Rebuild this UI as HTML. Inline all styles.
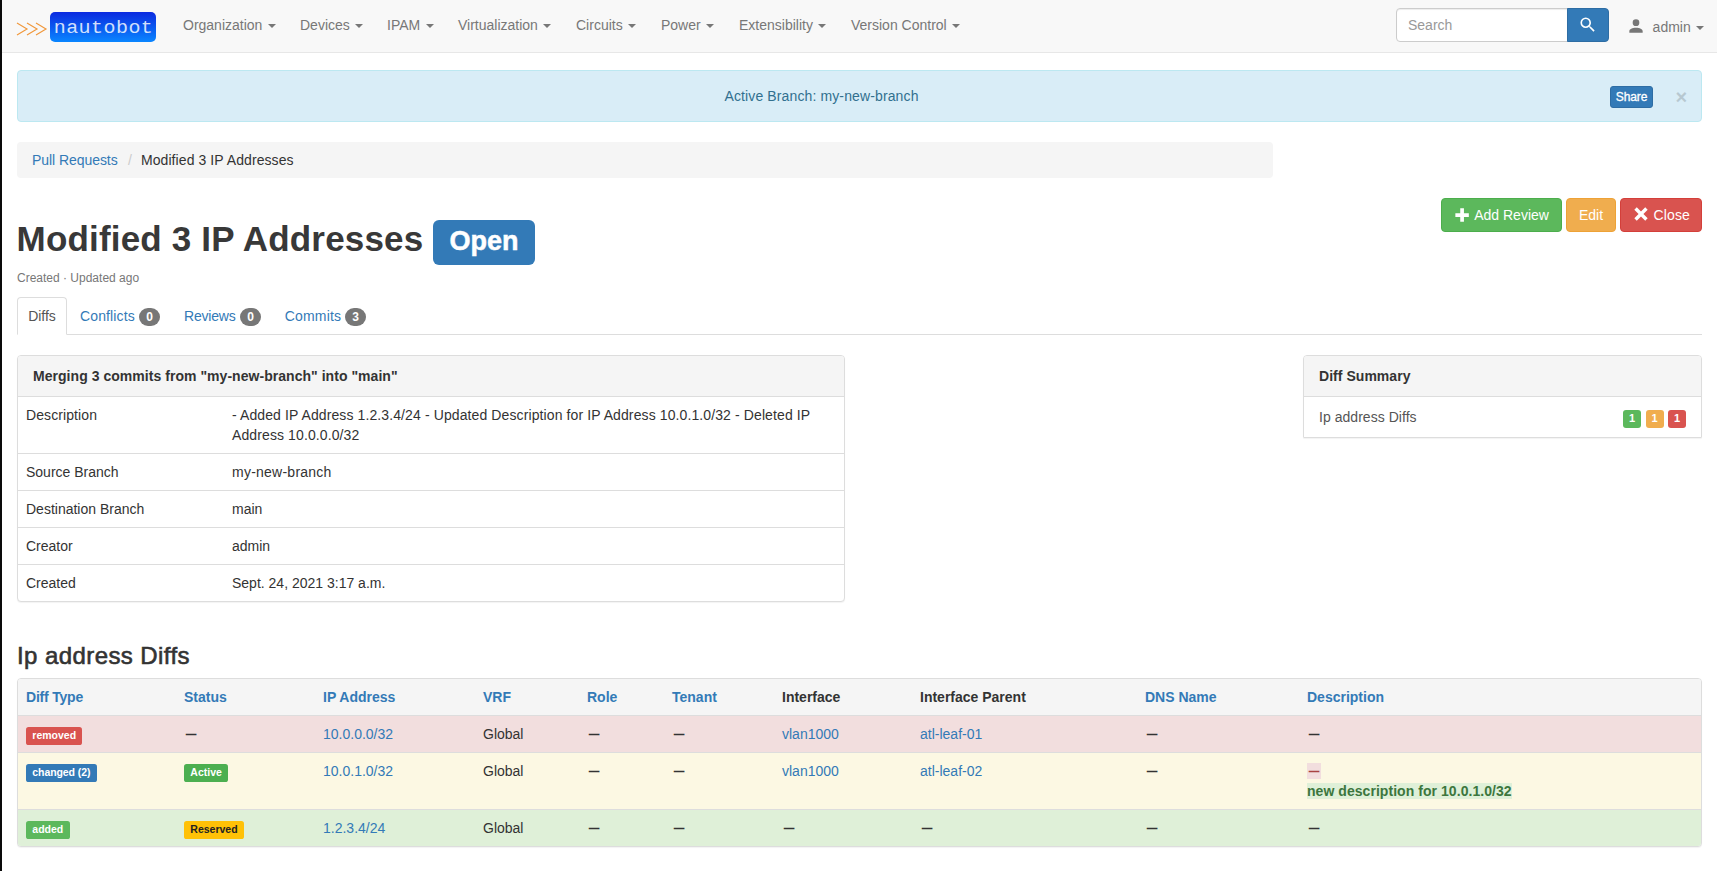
<!DOCTYPE html>
<html lang="en">
<head>
<meta charset="utf-8">
<title>Modified 3 IP Addresses - Nautobot</title>
<style>
*{box-sizing:border-box}
html,body{margin:0;padding:0}
body{width:1717px;height:871px;overflow:hidden;background:#fff;font-family:"Liberation Sans",Arial,sans-serif;font-size:14px;line-height:20px;color:#333;position:relative}
a{color:#337ab7;text-decoration:none}
.abs{position:absolute}
#edge{left:0;top:0;width:2px;height:871px;background:#0a0a0a}
/* navbar */
#navbar{left:2px;top:0;width:1715px;height:53px;background:#f8f8f8;border-bottom:1px solid #e7e7e7}
.nv{position:absolute;top:15px;color:#777;white-space:nowrap;line-height:20px}
.caret{display:inline-block;width:0;height:0;margin-left:1.5px;vertical-align:middle;border-top:4px solid;border-right:4px solid transparent;border-left:4px solid transparent}
#logo{left:50px;top:12px;width:106px;height:30px;border-radius:5px;background:linear-gradient(#0b2ae0,#0a86ff);color:rgba(255,255,255,.82);font-family:"Liberation Mono",monospace;font-size:20px;line-height:32.6px;letter-spacing:.45px;text-align:center;padding-left:1px}
#logo span{display:inline-block;transform:scaleY(.93);transform-origin:50% 74%}
#search{left:1396px;top:8px;width:172px;height:34px;border:1px solid #ccc;border-radius:4px 0 0 4px;background:#fff;color:#999;padding:6px 11px;line-height:20px;box-shadow:inset 0 1px 1px rgba(0,0,0,.075)}
#sbtn{left:1567px;top:8px;width:42px;height:34px;border:1px solid #2e6da4;border-radius:0 4px 4px 0;background:#337ab7}
/* alert */
#alert{left:17px;top:70px;width:1685px;height:52px;background:#d9edf7;border:1px solid #bce8f1;border-radius:4px;color:#31708f}
#alerttxt{left:0;width:1607px;top:15px;text-align:center;letter-spacing:.125px}
#share{left:1610px;top:86px;width:43px;height:22px;background:#337ab7;border:1px solid #2e6da4;border-radius:3px;color:#fff;font-size:12px;line-height:20px;text-align:center;-webkit-text-stroke:.3px #fff;letter-spacing:-.1px}
/* breadcrumb */
#bc{left:17px;top:142px;width:1256px;height:35.6px;background:#f5f5f5;border-radius:4px;padding:8.4px 15px 0;white-space:nowrap}
#bc .sep{color:#ccc;padding:0 6.6px 0 10.4px}
/* buttons */
.btn{position:absolute;top:198px;height:34px;border-radius:4px;color:#fff;padding:6px 0;line-height:20px;text-align:center;border:1px solid;white-space:nowrap}
h1{position:absolute;left:16.6px;top:215.4px;margin:0;font-size:35px;font-weight:bold;line-height:48px;white-space:nowrap;color:#383838;letter-spacing:.18px}
#open{left:433px;top:220px;width:102px;height:44.5px;background:#337ab7;border-radius:6px;color:#fff;font-weight:bold;font-size:27px;line-height:43px;text-align:center;-webkit-text-stroke:.5px #fff}
#small{left:17px;top:268px;font-size:12px;color:#777;white-space:nowrap}
/* tabs */
#tabline{left:17px;top:334px;width:1685px;height:1px;background:#ddd}
#tabact{left:17px;top:297px;width:50px;height:38px;border:1px solid #ddd;border-bottom-color:#fff;border-radius:4px 4px 0 0;background:#fff;text-align:center;padding-top:8.4px;color:#555}
.tab{position:absolute;top:306px;white-space:nowrap}
.badge{top:308px;width:20.6px;height:17.7px;padding:0;font-size:12px;font-weight:bold;color:#fff;line-height:18.6px;background:#777;border-radius:10px;text-align:center}
/* panels */
.panel{position:absolute;background:#fff;border:1px solid #ddd;border-radius:4px;box-shadow:0 1px 1px rgba(0,0,0,.05);overflow:hidden}
.ph{letter-spacing:.04px;background:#f5f5f5;border-bottom:1px solid #ddd;padding:10px 15px;font-weight:bold;height:41px}
table{border-collapse:collapse;width:100%}
td,th{padding:8px;vertical-align:top;text-align:left;line-height:20px}
#p1 td{border-top:1px solid #ddd}
#p1 tr:first-child td{border-top:0}
.label{display:inline-block;margin-bottom:-2px;padding:2.1px 6.3px 5.1px;font-size:10.5px;font-weight:bold;line-height:10.5px;color:#fff;border-radius:.25em;vertical-align:baseline;white-space:nowrap}
h3{position:absolute;left:17px;top:640px;margin:0;font-size:24px;font-weight:normal;line-height:32px;white-space:nowrap;-webkit-text-stroke:.6px #333;letter-spacing:.42px}
.d{display:inline-block;transform:scaleX(.76) translateY(0px);transform-origin:50% 50%;font-weight:bold}
.sl{position:absolute;top:13px;width:18px;height:18px;padding:0;font-size:11px;line-height:16.5px;text-align:center;border-radius:3px}
#t2 th{background:#f5f5f5;font-weight:bold;height:36px;padding-top:7.5px;padding-bottom:7.5px;border-bottom:0}
#t2 td{border-top:1px solid #ddd}
</style>
</head>
<body>
<div id="edge" class="abs"></div>
<div id="navbar" class="abs"></div>
<svg class="abs" style="left:16.2px;top:20.5px" width="33" height="16" viewBox="0 0 33 16"><g fill="none" stroke="#f0973a" stroke-width="1.15"><path d="M1 2 L11 8 L1 14"/><path d="M11 2 L21 8 L11 14"/><path d="M20 2 L30 8 L20 14"/></g></svg>
<div id="logo" class="abs"><span>nautobot</span></div>
<div class="nv" style="left:183px">Organization <span class="caret"></span></div>
<div class="nv" style="left:300px">Devices <span class="caret"></span></div>
<div class="nv" style="left:387px">IPAM <span class="caret"></span></div>
<div class="nv" style="left:458px">Virtualization <span class="caret"></span></div>
<div class="nv" style="left:576px">Circuits <span class="caret"></span></div>
<div class="nv" style="left:661px">Power <span class="caret"></span></div>
<div class="nv" style="left:739px">Extensibility <span class="caret"></span></div>
<div class="nv" style="left:851px">Version Control <span class="caret"></span></div>
<div id="search" class="abs">Search</div>
<div id="sbtn" class="abs"><svg style="position:absolute;left:9.6px;top:5.6px" width="19.5" height="19.5" viewBox="0 0 24 24"><path fill="#fff" d="M9.5 3A6.5 6.5 0 0 1 16 9.500000000000002c0 1.61-.59 3.090000000000001-1.56 4.23l.27.27h.79l5 5-1.500000000000001 1.5-5-5v-.79l-.27-.27A6.516 6.516 0 0 1 9.5 16A6.5 6.5 0 0 1 3 9.5A6.5 6.5 0 0 1 9.5 3m0 2C7 5 5 7 5 9.5S7 14 9.5 14S14 12 14 9.5S12 5 9.5 5z"/></svg></div>
<svg class="abs" style="left:1626.3px;top:16.3px" width="20" height="20" viewBox="0 0 24 24"><path fill="#777" d="M12 4a4 4 0 0 1 4 4a4 4 0 0 1-4 4a4 4 0 0 1-4-4a4 4 0 0 1 4-4m0 10c4.420000000000002 0 8 1.79 8 4v2H4v-2c0-2.21 3.58-4 8-4z"/></svg>
<div class="nv" style="left:1652.6px;top:17px">admin <span class="caret"></span></div>

<div id="alert" class="abs"><div id="alerttxt" class="abs">Active Branch: my-new-branch</div></div>
<div id="share" class="abs">Share</div>
<div class="abs" style="left:1675.4px;top:86.6px;font-size:20px;font-weight:bold;line-height:21px;color:#000;opacity:.15">&times;</div>

<div id="bc" class="abs"><a style="letter-spacing:-.06px">Pull Requests</a><span class="sep">/</span><span style="letter-spacing:.09px;margin-left:2.4px">Modified 3 IP Addresses</span></div>

<div class="btn" style="left:1441px;width:121px;background:#5cb85c;border-color:#4cae4c"><svg style="position:absolute;left:9.9px;top:5.6px" width="20.2" height="20.2" viewBox="0 0 24 24"><path fill="#fff" d="M20 14.2H14.2V20H9.800000000000001V14.2H4V9.800000000000001H9.800000000000001V4H14.2V9.800000000000001H20Z"/></svg><span style="position:absolute;left:32.2px;top:6px">Add Review</span></div>
<div class="btn" style="left:1566px;width:50px;background:#f0ad4e;border-color:#eea236">Edit</div>
<div class="btn" style="left:1620px;width:82px;background:#d9534f;border-color:#d43f3a"><svg style="position:absolute;left:9.9px;top:5.4px" width="20" height="20" viewBox="0 0 24 24"><path fill="#fff" d="M20 6.91L17.09 4L12 9.09L6.91 4L4 6.91L9.09 12L4 17.09L6.91 20L12 14.91L17.09 20L20 17.09L14.91 12L20 6.91Z"/></svg><span style="position:absolute;left:32.6px;top:6px;letter-spacing:.1px">Close</span></div>

<h1>Modified 3 IP Addresses</h1>
<div id="open" class="abs">Open</div>
<div id="small" class="abs">Created &middot; Updated ago</div>

<div id="tabline" class="abs"></div>
<div id="tabact" class="abs">Diffs</div>
<div class="tab" style="left:80px;letter-spacing:.12px"><a>Conflicts</a></div><span class="badge abs" style="left:139.3px">0</span>
<div class="tab" style="left:184px;letter-spacing:-.2px"><a>Reviews</a></div><span class="badge abs" style="left:240.4px">0</span>
<div class="tab" style="left:284.7px;letter-spacing:.18px"><a>Commits</a></div><span class="badge abs" style="left:345.4px">3</span>

<div id="p1" class="panel" style="left:17px;top:355px;width:828px;height:247px">
<div class="ph">Merging 3 commits from "my-new-branch" into "main"</div>
<table>
<tr><td style="width:206px;letter-spacing:.09px">Description</td><td style="letter-spacing:.108px">- Added IP Address 1.2.3.4/24 - Updated Description for IP Address 10.0.1.0/32 - Deleted IP Address 10.0.0.0/32</td></tr>
<tr><td>Source Branch</td><td style="letter-spacing:.24px">my-new-branch</td></tr>
<tr><td>Destination Branch</td><td>main</td></tr>
<tr><td>Creator</td><td>admin</td></tr>
<tr><td>Created</td><td>Sept. 24, 2021 3:17 a.m.</td></tr>
</table>
</div>

<div id="p2" class="panel" style="left:1303px;top:355px;width:399px;height:83px;border-radius:4px 4px 1px 1px">
<div class="ph">Diff Summary</div>
<div style="padding:10px 15px;position:relative;height:41px;color:#555;letter-spacing:.04px">Ip address Diffs
<span class="label sl" style="left:319px;background:#5cb85c">1</span>
<span class="label sl" style="left:341.5px;background:#f0ad4e">1</span>
<span class="label sl" style="left:364px;background:#d9534f">1</span>
</div>
</div>

<h3>Ip address Diffs</h3>
<div id="p3" class="panel" style="left:17px;top:678px;width:1685px;height:169px">
<table id="t2" style="table-layout:fixed">
<colgroup><col style="width:158px"><col style="width:139px"><col style="width:160px"><col style="width:104px"><col style="width:85px"><col style="width:110px"><col style="width:138px"><col style="width:225px"><col style="width:162px"><col></colgroup>
<tr><th><a style="letter-spacing:-.2px">Diff Type</a></th><th><a>Status</a></th><th><a>IP Address</a></th><th><a>VRF</a></th><th><a>Role</a></th><th><a>Tenant</a></th><th>Interface</th><th>Interface Parent</th><th><a>DNS Name</a></th><th><a>Description</a></th></tr>
<tr style="background:#f2dede"><td><span class="label" style="background:#d9534f">removed</span></td><td><span class="d">&mdash;</span></td><td><a>10.0.0.0/32</a></td><td>Global</td><td><span class="d">&mdash;</span></td><td><span class="d">&mdash;</span></td><td><a>vlan1000</a></td><td><a>atl-leaf-01</a></td><td><span class="d">&mdash;</span></td><td><span class="d">&mdash;</span></td></tr>
<tr style="background:#fcf8e3"><td><span class="label" style="background:#337ab7;letter-spacing:-.08px">changed (2)</span></td><td><span class="label" style="background:#4caf50">Active</span></td><td><a>10.0.1.0/32</a></td><td>Global</td><td><span class="d">&mdash;</span></td><td><span class="d">&mdash;</span></td><td><a>vlan1000</a></td><td><a>atl-leaf-02</a></td><td><span class="d">&mdash;</span></td><td><span style="background:#f2dede;color:#a94442;font-weight:bold"><span class="d">&mdash;</span></span><br><span style="background:#dff0d8;color:#3c763d;font-weight:bold;letter-spacing:.05px">new description for 10.0.1.0/32</span></td></tr>
<tr style="background:#dff0d8"><td><span class="label" style="background:#5cb85c">added</span></td><td><span class="label" style="background:#ffc107;color:#222">Reserved</span></td><td><a>1.2.3.4/24</a></td><td>Global</td><td><span class="d">&mdash;</span></td><td><span class="d">&mdash;</span></td><td><span class="d">&mdash;</span></td><td><span class="d">&mdash;</span></td><td><span class="d">&mdash;</span></td><td><span class="d">&mdash;</span></td></tr>
</table>
</div>
</body>
</html>
